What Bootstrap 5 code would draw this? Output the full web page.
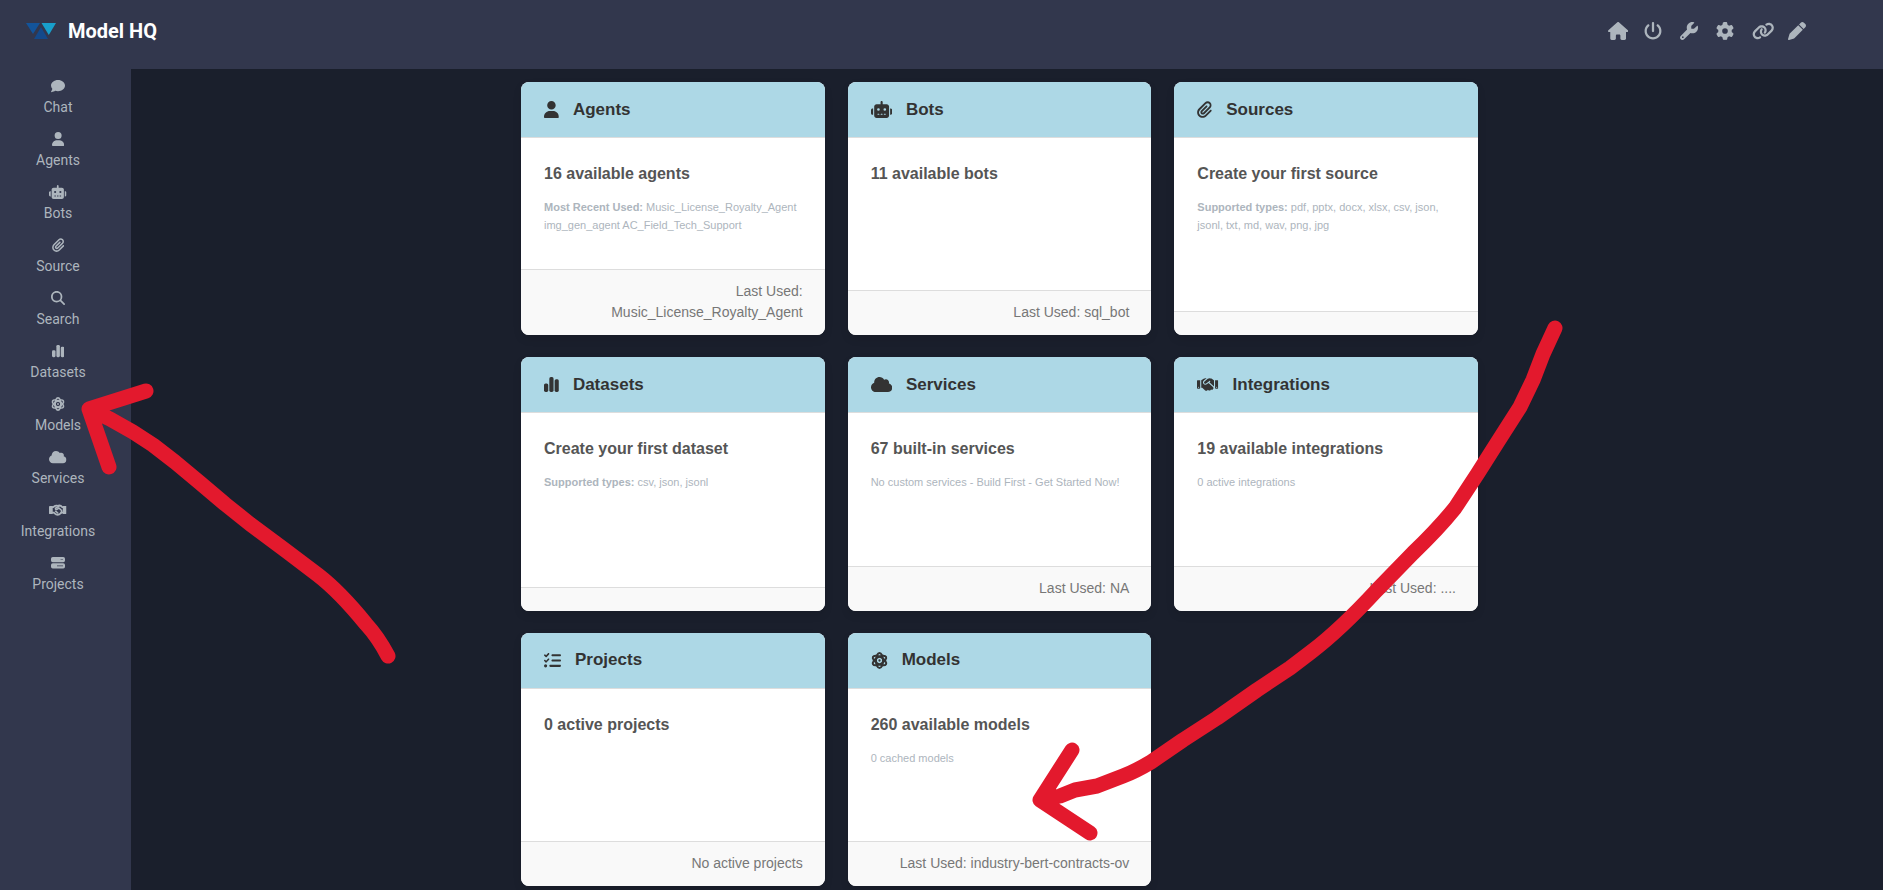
<!DOCTYPE html>
<html lang="en">
<head>
<meta charset="utf-8">
<meta name="viewport" content="width=device-width, initial-scale=1">
<title>Model HQ</title>
<link href="https://cdn.jsdelivr.net/npm/bootstrap@5.3.0/dist/css/bootstrap.min.css" rel="stylesheet">
<style>
  body { background: #1a1f2c; font-family: "Liberation Sans", Arial, sans-serif; }
  .ico { height: 1em; width: auto; fill: currentColor; display: block; flex: none; }
  .chrome { background: #32374d; color: #adb5bd; font-family: Roboto, sans-serif; }
  .topbar { height: 69px; padding: 0 59px 7px 26px; }
  .brand { font-size: 20px; font-weight: 700; color: #fff; gap: 12px; }
  .brand:hover { color: #fff; }
  .tool { width: 36px; padding: 0; border: 0; background: none; color: inherit; font-size: 18px; text-align: left; }
  .side { width: 131px; padding: 7px 15px 0 0; }
  .side-link { padding: 3px 0 12px; gap: 4px; color: inherit; font-size: 14px; line-height: 20px; }
  .side-link:hover { color: #fff; }
  .board { padding: 13px 15px 4px 0; }
  .tiles { display: grid; width: 957px; max-width: 100%; grid-template-columns: repeat(3, 1fr); grid-auto-rows: minmax(253px, 1fr); gap: 22px 23px; }
  .tile { border: 0; border-radius: 8px; overflow: hidden; box-shadow: 0 4px 8px rgba(0, 0, 0, .1); }
  .tile .card-header { background: #add8e6; border-bottom: 1px solid #ddd; color: #333; height: 56px; padding: 0 23px; gap: 14px; font-size: 17px; }
  .tile h2 { font-size: 17px; line-height: 22px; font-weight: 700; margin: 0; }
  .tile .card-body { padding: 23px; }
  .count { font-size: 16px; line-height: 26px; font-weight: 700; color: #555; margin: 0 0 11px; }
  .note { font-size: 11px; line-height: 18px; color: #adb5bd; margin: 0; }
  .tile .card-footer { background: #f9f9f9; border-top: 1px solid #ddd; color: #777; padding: 11px 22px 12px; font-size: 14px; line-height: 21px; text-align: right; }
  .marks { inset: 0; width: 100%; height: 100%; pointer-events: none; fill: none; stroke: #e3192d; stroke-width: 15; stroke-linecap: round; stroke-linejoin: round; z-index: 5; }
</style>
</head>
<body>
<svg class="d-none" aria-hidden="true">
  <symbol id="house" viewBox="0 0 576 512"><path d="M575.8 255.5c0 18-15 32.1-32 32.1h-32l.7 160.2c0 2.7-.2 5.4-.5 8.1V472c0 22.1-17.9 40-40 40H392c-22.1 0-40-17.9-40-40V384c0-17.7-14.3-32-32-32H256c-17.7 0-32 14.3-32 32v88c0 22.1-17.9 40-40 40H104c-22.1 0-40-17.9-40-40V287.600H32c-18 0-32-14-32-32.100c0-9 3-17 10-24L266.400 8c7-7 15-8 22-8s15 2 21 7L564.800 231.500c8 7 12 15 11 24z"/></symbol>
  <symbol id="power" viewBox="0 0 512 512"><path d="M288 32c0-17.700-14.300-32-32-32s-32 14.300-32 32V256c0 17.700 14.300 32 32 32s32-14.300 32-32V32zM143.500 120.600c13.600-11.300 15.400-31.500 4.100-45.100s-31.500-15.400-45.100-4.100C49.700 115.400 16 181.800 16 256c0 132.500 107.500 240 240 240s240-107.500 240-240c0-74.200-33.800-140.600-86.600-184.600c-13.600-11.300-33.800-9.400-45.100 4.100s-9.400 33.800 4.100 45.100c38.900 32.300 63.500 81 63.500 135.400c0 97.200-78.800 176-176 176s-176-78.800-176-176c0-54.400 24.700-103.100 63.500-135.400z"/></symbol>
  <symbol id="wrench" viewBox="0 0 512 512"><path d="M352 320c88.400 0 160-71.600 160-160c0-15.300-2.200-30.100-6.200-44.200c-3.100-10.800-16.400-13.200-24.300-5.300l-76.800 76.800c-3 3-7.100 4.700-11.300 4.700H336c-8.800 0-16-7.200-16-16V118.600c0-4.200 1.700-8.300 4.700-11.300l76.800-76.800c7.900-7.900 5.400-21.200-5.300-24.300C382.100 2.200 367.300 0 352 0C263.600 0 192 71.600 192 160c0 19.100 3.400 37.500 9.500 54.500L19.900 396.100C7.200 408.800 0 426.100 0 444.100C0 481.600 30.400 512 67.900 512c18 0 35.300-7.200 48-19.900L297.500 310.500c17 6.200 35.400 9.500 54.500 9.500zM80 408a24 24 0 1 1 0 48 24 24 0 1 1 0-48z"/></symbol>
  <symbol id="gear" viewBox="0 0 512 512"><path d="M495.900 166.600c3.200 8.700 .5 18.400-6.400 24.600l-43.300 39.400c1.100 8.300 1.700 16.800 1.700 25.400s-.6 17.100-1.700 25.400l43.300 39.400c6.900 6.200 9.600 15.900 6.400 24.600c-4.400 11.900-9.700 23.300-15.800 34.300l-4.700 8.100c-6.600 11-14 21.400-22.100 31.200c-5.900 7.200-15.700 9.600-24.500 6.800l-55.700-17.700c-13.400 10.300-28.200 18.900-44 25.400l-12.500 57.100c-2 9.100-9 16.300-18.200 17.800c-13.800 2.300-28 3.500-42.500 3.500s-28.700-1.200-42.500-3.500c-9.200-1.500-16.200-8.700-18.200-17.800l-12.500-57.100c-15.800-6.500-30.600-15.100-44-25.400L83.100 425.900c-8.800 2.800-18.600 .3-24.500-6.800c-8.100-9.800-15.500-20.200-22.100-31.200l-4.700-8.100c-6.100-11-11.400-22.400-15.800-34.300c-3.200-8.700-.5-18.400 6.400-24.600l43.300-39.400C64.600 273.100 64 264.600 64 256s.6-17.100 1.700-25.400L22.400 191.200c-6.900-6.200-9.600-15.900-6.400-24.600c4.400-11.900 9.700-23.300 15.800-34.300l4.700-8.100c6.600-11 14-21.400 22.100-31.200c5.900-7.200 15.700-9.600 24.500-6.800l55.700 17.700c13.400-10.300 28.200-18.900 44-25.400l12.500-57.100c2-9.100 9-16.300 18.200-17.800C227.300 1.200 241.500 0 256 0s28.700 1.200 42.500 3.500c9.200 1.500 16.200 8.700 18.200 17.800l12.500 57.100c15.800 6.500 30.600 15.100 44 25.400l55.700-17.700c8.800-2.800 18.600-.3 24.500 6.800c8.100 9.800 15.500 20.200 22.100 31.200l4.700 8.100c6.100 11 11.400 22.400 15.800 34.300zM256 336a80 80 0 1 0 0-160 80 80 0 1 0 0 160z"/></symbol>
  <symbol id="link" viewBox="0 0 640 512"><path d="M579.800 267.700c56.500-56.500 56.500-148 0-204.500c-50-50-128.800-56.500-186.300-15.400l-1.600 1.100c-14.400 10.300-17.700 30.300-7.400 44.600s30.300 17.700 44.600 7.400l1.600-1.100c32.100-22.900 76-19.300 103.800 8.600c31.500 31.500 31.500 82.500 0 114L422.300 334.800c-31.500 31.500-82.500 31.500-114 0c-27.900-27.900-31.500-71.800-8.600-103.800l1.100-1.600c10.300-14.400 6.900-34.400-7.400-44.600s-34.400-6.900-44.600 7.400l-1.100 1.600C206.500 251.200 213 330 263 380c56.500 56.500 148 56.500 204.500 0L579.800 267.700zM60.200 244.300c-56.500 56.500-56.500 148 0 204.500c50 50 128.800 56.500 186.300 15.400l1.600-1.100c14.400-10.300 17.700-30.300 7.400-44.600s-30.300-17.700-44.600-7.400l-1.600 1.100c-32.100 22.900-76 19.300-103.800-8.600C74 372 74 321 105.500 289.500L217.700 177.200c31.500-31.500 82.500-31.500 114 0c27.900 27.900 31.500 71.800 8.600 103.900l-1.100 1.600c-10.300 14.400-6.900 34.400 7.400 44.600s34.400 6.900 44.600-7.400l1.100-1.600C433.500 260.800 427 182 377 132c-56.500-56.500-148-56.500-204.500 0L60.200 244.300z"/></symbol>
  <symbol id="pen" viewBox="0 0 512 512"><path d="M362.700 19.300L314.300 67.700 444.300 197.700l48.400-48.400c25-25 25-65.500 0-90.500L453.300 19.300c-25-25-65.500-25-90.500 0zm-71 71L58.600 323.500c-10.400 10.400-18 23.300-22.200 37.400L1 481.200C-1.500 489.700 .8 498.800 7 505s15.300 8.500 23.700 6.100l120.300-35.400c14.100-4.200 27-11.800 37.400-22.200L421.700 220.300 291.700 90.300z"/></symbol>
  <symbol id="chat" viewBox="0 0 512 512"><path d="M512 240c0 114.900-114.600 208-256 208c-37.100 0-72.300-6.400-104.100-17.900c-11.900 8.700-31.300 20.600-54.300 30.600C73.600 471.100 44.700 480 16 480c-6.500 0-12.300-3.900-14.800-9.900c-2.500-6-1.100-12.800 3.400-17.400c1-1 3-3.300 6.500-7.400c4.100-5 9.600-12.400 15.200-21.600c10-16.600 19.500-38.400 21.400-62.900C17.700 326.800 0 285.100 0 240C0 125.100 114.600 32 256 32s256 93.100 256 208z"/></symbol>
  <symbol id="user" viewBox="0 0 448 512"><path d="M224 256A128 128 0 1 0 224 0a128 128 0 1 0 0 256zm-45.700 48C79.800 304 0 383.800 0 482.300C0 498.700 13.300 512 29.700 512H418.300c16.400 0 29.700-13.300 29.700-29.700C448 383.800 368.200 304 269.700 304H178.300z"/></symbol>
  <symbol id="robot" viewBox="0 0 640 512"><path d="M320 0c17.700 0 32 14.300 32 32V96H472c39.800 0 72 32.200 72 72V440c0 39.800-32.200 72-72 72H168c-39.800 0-72-32.200-72-72V168c0-39.800 32.200-72 72-72H288V32c0-17.700 14.300-32 32-32zM208 384c-8.800 0-16 7.200-16 16s7.200 16 16 16h32c8.800 0 16-7.200 16-16s-7.200-16-16-16H208zm96 0c-8.800 0-16 7.200-16 16s7.200 16 16 16h32c8.800 0 16-7.200 16-16s-7.200-16-16-16H304zm96 0c-8.800 0-16 7.200-16 16s7.200 16 16 16h32c8.800 0 16-7.200 16-16s-7.200-16-16-16H400zM264 256a40 40 0 1 0 -80 0 40 40 0 1 0 80 0zm152 40a40 40 0 1 0 0-80 40 40 0 1 0 0 80zM48 224H64V416H48c-26.500 0-48-21.500-48-48V272c0-26.500 21.500-48 48-48zm544 0c26.500 0 48 21.500 48 48v96c0 26.500-21.500 48-48 48H576V224h16z"/></symbol>
  <symbol id="clip" viewBox="0 0 448 512"><path d="M364.200 83.800c-24.400-24.400-64-24.400-88.400 0l-184 184c-42.100 42.100-42.100 110.300 0 152.400s110.300 42.100 152.400 0l152-152c10.900-10.900 28.700-10.900 39.600 0s10.900 28.700 0 39.600l-152 152c-64 64-167.600 64-231.600 0s-64-167.600 0-231.600l184-184c46.300-46.300 121.300-46.300 167.600 0s46.300 121.300 0 167.600l-176 176c-28.600 28.600-75 28.600-103.600 0s-28.600-75 0-103.600l144-144c10.900-10.900 28.700-10.900 39.600 0s10.900 28.700 0 39.600l-144 144c-6.700 6.700-6.700 17.700 0 24.400s17.700 6.700 24.400 0l176-176c24.400-24.400 24.400-64 0-88.400z"/></symbol>
  <symbol id="search" viewBox="0 0 512 512"><path d="M416 208c0 45.900-14.900 88.300-40 122.700L502.600 457.400c12.500 12.500 12.500 32.800 0 45.300s-32.800 12.500-45.300 0L330.700 376c-34.400 25.200-76.800 40-122.700 40C93.100 416 0 322.900 0 208S93.100 0 208 0S416 93.100 416 208zM208 352a144 144 0 1 0 0-288 144 144 0 1 0 0 288z"/></symbol>
  <symbol id="bars" viewBox="0 0 448 512"><rect y="224" width="128" height="256" rx="48"/><rect x="160" y="32" width="128" height="448" rx="48"/><rect x="320" y="96" width="128" height="384" rx="48"/></symbol>
  <symbol id="atom" viewBox="0 0 512 512"><g fill="none" stroke="currentColor" stroke-width="60"><ellipse cx="256" cy="256" rx="105" ry="226"/><ellipse cx="256" cy="256" rx="105" ry="226" transform="rotate(60 256 256)"/><ellipse cx="256" cy="256" rx="105" ry="226" transform="rotate(120 256 256)"/></g><circle cx="256" cy="256" r="34"/></symbol>
  <symbol id="cloud" viewBox="0 0 640 512"><path d="M0 336c0 79.500 64.500 144 144 144H512c70.700 0 128-57.300 128-128c0-61.900-44-113.600-102.400-125.400c4.100-10.700 6.400-22.400 6.400-34.600c0-53-43-96-96-96c-19.700 0-38.100 6-53.300 16.200C367 64.200 315.300 32 256 32C167.600 32 96 103.600 96 192c0 2.700 .1 5.400 .2 8.100C40.200 219.800 0 273.200 0 336z"/></symbol>
  <symbol id="shake" viewBox="0 0 640 512"><path d="M323.400 85.200l-96.800 78.400c-16.100 13-19.200 36.400-7 53.100c12.900 17.800 38 21.300 55.300 7.800l99.300-77.200c7-5.400 17-4.200 22.500 2.800s4.200 17-2.800 22.500l-20.900 16.200L512 316.800V128h-.7l-3.900-2.500L434.800 79c-15.300-9.800-33.200-15-51.400-15c-21.800 0-43 7.500-60 21.200zm22.800 124.400l-51.700 40.200C263 274.300 217.300 268 193.700 235.600c-22.200-30.500-16.600-73.100 12.700-96.800l83.200-67.300c-11.600-4.900-24.100-7.400-36.800-7.400C234 64 215.700 69.600 200 80l-72 48V352h28.200l91.400 83.400c19.600 17.900 49.900 16.500 67.800-3.100c5.500-6.100 9.200-13.200 11.100-20.600l17 15.600c19.500 17.900 49.900 16.600 67.800-2.900c4.500-4.900 7.800-10.600 9.900-16.500c19.400 13 45.800 10.300 62.100-7.500c17.900-19.500 16.600-49.900-2.900-67.800l-134.200-123zM16 128c-8.800 0-16 7.200-16 16V352c0 17.700 14.300 32 32 32H64c17.700 0 32-14.300 32-32V128H16zM48 320a16 16 0 1 1 0 32 16 16 0 1 1 0-32zM544 128V352c0 17.700 14.300 32 32 32h32c17.700 0 32-14.300 32-32V144c0-8.800-7.200-16-16-16H544zm32 208a16 16 0 1 1 32 0 16 16 0 1 1 -32 0z"/></symbol>
  <symbol id="shake-flat" viewBox="0 0 640 512"><rect y="112" width="136" height="288" rx="16"/><rect x="504" y="112" width="136" height="288" rx="16"/><g fill="none" stroke="currentColor" stroke-linecap="round" stroke-linejoin="round"><path stroke-width="68" d="M96 150h64l70-48q30-14 60-4M350 98q40-16 76 2l60 50h60M96 350h70l90 66q60 26 120 0l90-66h80"/><path stroke-width="56" d="M360 118L240 190q-16 44 34 50l90-56 96 90q18 40-20 66M240 300l80 66"/></g></symbol>
  <symbol id="server" viewBox="0 0 512 512"><path fill-rule="evenodd" d="M64 32H448a64 64 0 0 1 64 64v64a64 64 0 0 1-64 64H64a64 64 0 0 1-64-64V96a64 64 0 0 1 64-64zM350 116v24h90v-24zM64 264H448a64 64 0 0 1 64 64v64a64 64 0 0 1-64 64H64a64 64 0 0 1-64-64v-64a64 64 0 0 1 64-64zM220 348v24h220v-24z"/></symbol>
  <symbol id="tasks" viewBox="0 0 512 512"><path d="M152.100 38.200c9.900 8.900 10.700 24 1.800 33.900l-72 80c-4.400 4.900-10.600 7.800-17.200 7.900s-12.900-2.400-17.600-7L7 113C-2.300 103.600-2.300 88.400 7 79s24.600-9.400 33.900 0l22.100 22.100 55.100-61.200c8.900-9.900 24-10.700 33.900-1.800zm0 160c9.900 8.900 10.700 24 1.800 33.900l-72 80c-4.400 4.900-10.600 7.800-17.200 7.900s-12.900-2.400-17.600-7L7 273c-9.400-9.400-9.400-24.600 0-33.900s24.600-9.400 33.900 0l22.100 22.100 55.100-61.200c8.900-9.900 24-10.700 33.900-1.800zM224 96c0-17.700 14.300-32 32-32H480c17.700 0 32 14.300 32 32s-14.300 32-32 32H256c-17.700 0-32-14.300-32-32zm0 160c0-17.700 14.300-32 32-32H480c17.700 0 32 14.300 32 32s-14.300 32-32 32H256c-17.700 0-32-14.300-32-32zM160 416c0-17.700 14.300-32 32-32H480c17.700 0 32 14.300 32 32s-14.300 32-32 32H192c-17.700 0-32-14.300-32-32zM48 368a48 48 0 1 1 0 96 48 48 0 1 1 0-96z"/></symbol>
</svg>

<div class="position-relative d-flex flex-column min-vh-100">
  <header class="chrome topbar d-flex align-items-center justify-content-between">
    <a class="brand d-flex align-items-center text-decoration-none" href="#">
      <svg width="30" height="16" viewBox="0 0 30 16" aria-hidden="true"><path fill="#13549a" d="M0 0h14L7 11z"/><path fill="#14498a" d="M15 4l7 12H8z"/><path fill="#189fcb" d="M15.500 0H30l-7.200 12z"/></svg>
      <span>Model HQ</span>
    </a>
    <div class="d-flex">
      <button class="tool" type="button" aria-label="Home"><svg class="ico" viewBox="0 0 576 512"><use href="#house"/></svg></button>
      <button class="tool" type="button" aria-label="Power"><svg class="ico" viewBox="0 0 512 512"><use href="#power"/></svg></button>
      <button class="tool" type="button" aria-label="Tools"><svg class="ico" viewBox="0 0 512 512"><use href="#wrench"/></svg></button>
      <button class="tool" type="button" aria-label="Settings"><svg class="ico" viewBox="0 0 512 512"><use href="#gear"/></svg></button>
      <button class="tool" type="button" aria-label="Links"><svg class="ico" viewBox="0 0 640 512"><use href="#link"/></svg></button>
      <button class="tool" type="button" aria-label="Edit"><svg class="ico" viewBox="0 0 512 512"><use href="#pen"/></svg></button>
    </div>
  </header>

  <div class="d-flex flex-grow-1">
    <nav class="chrome side d-flex flex-column flex-shrink-0" aria-label="Main">
      <a class="side-link d-flex flex-column align-items-center text-decoration-none" href="#"><svg class="ico" viewBox="0 0 512 512"><use href="#chat"/></svg>Chat</a>
      <a class="side-link d-flex flex-column align-items-center text-decoration-none" href="#"><svg class="ico" viewBox="0 0 448 512"><use href="#user"/></svg>Agents</a>
      <a class="side-link d-flex flex-column align-items-center text-decoration-none" href="#"><svg class="ico" viewBox="0 0 640 512"><use href="#robot"/></svg>Bots</a>
      <a class="side-link d-flex flex-column align-items-center text-decoration-none" href="#"><svg class="ico" viewBox="0 0 448 512"><use href="#clip"/></svg>Source</a>
      <a class="side-link d-flex flex-column align-items-center text-decoration-none" href="#"><svg class="ico" viewBox="0 0 512 512"><use href="#search"/></svg>Search</a>
      <a class="side-link d-flex flex-column align-items-center text-decoration-none" href="#"><svg class="ico" viewBox="0 0 448 512"><use href="#bars"/></svg>Datasets</a>
      <a class="side-link d-flex flex-column align-items-center text-decoration-none" href="#"><svg class="ico" viewBox="0 0 512 512"><use href="#atom"/></svg>Models</a>
      <a class="side-link d-flex flex-column align-items-center text-decoration-none" href="#"><svg class="ico" viewBox="0 0 640 512"><use href="#cloud"/></svg>Services</a>
      <a class="side-link d-flex flex-column align-items-center text-decoration-none" href="#"><svg class="ico" viewBox="0 0 640 512"><use href="#shake-flat"/></svg>Integrations</a>
      <a class="side-link d-flex flex-column align-items-center text-decoration-none" href="#"><svg class="ico" viewBox="0 0 512 512"><use href="#server"/></svg>Projects</a>
    </nav>

    <main class="board flex-grow-1 d-flex justify-content-center">
      <div class="tiles">
        <section class="card tile">
          <div class="card-header d-flex align-items-center"><svg class="ico" viewBox="0 0 448 512"><use href="#user"/></svg><h2>Agents</h2></div>
          <div class="card-body"><p class="count">16 available agents</p><p class="note"><b>Most Recent Used:</b> Music_License_Royalty_Agent img_gen_agent AC_Field_Tech_Support</p></div>
          <div class="card-footer">Last Used: Music_License_Royalty_Agent</div>
        </section>
        <section class="card tile">
          <div class="card-header d-flex align-items-center"><svg class="ico" viewBox="0 0 640 512"><use href="#robot"/></svg><h2>Bots</h2></div>
          <div class="card-body"><p class="count">11 available bots</p></div>
          <div class="card-footer">Last Used: sql_bot</div>
        </section>
        <section class="card tile">
          <div class="card-header d-flex align-items-center"><svg class="ico" viewBox="0 0 448 512"><use href="#clip"/></svg><h2>Sources</h2></div>
          <div class="card-body"><p class="count">Create your first source</p><p class="note"><b>Supported types:</b> pdf, pptx, docx, xlsx, csv, json, jsonl, txt, md, wav, png, jpg</p></div>
          <div class="card-footer"></div>
        </section>
        <section class="card tile">
          <div class="card-header d-flex align-items-center"><svg class="ico" viewBox="0 0 448 512"><use href="#bars"/></svg><h2>Datasets</h2></div>
          <div class="card-body"><p class="count">Create your first dataset</p><p class="note"><b>Supported types:</b> csv, json, jsonl</p></div>
          <div class="card-footer"></div>
        </section>
        <section class="card tile">
          <div class="card-header d-flex align-items-center"><svg class="ico" viewBox="0 0 640 512"><use href="#cloud"/></svg><h2>Services</h2></div>
          <div class="card-body"><p class="count">67 built-in services</p><p class="note">No custom services - Build First - Get Started Now!</p></div>
          <div class="card-footer">Last Used: NA</div>
        </section>
        <section class="card tile">
          <div class="card-header d-flex align-items-center"><svg class="ico" viewBox="0 0 640 512"><use href="#shake"/></svg><h2>Integrations</h2></div>
          <div class="card-body"><p class="count">19 available integrations</p><p class="note">0 active integrations</p></div>
          <div class="card-footer">Last Used: ....</div>
        </section>
        <section class="card tile">
          <div class="card-header d-flex align-items-center"><svg class="ico" viewBox="0 0 512 512"><use href="#tasks"/></svg><h2>Projects</h2></div>
          <div class="card-body"><p class="count">0 active projects</p></div>
          <div class="card-footer">No active projects</div>
        </section>
        <section class="card tile">
          <div class="card-header d-flex align-items-center"><svg class="ico" viewBox="0 0 512 512"><use href="#atom"/></svg><h2>Models</h2></div>
          <div class="card-body"><p class="count">260 available models</p><p class="note">0 cached models</p></div>
          <div class="card-footer">Last Used: industry-bert-contracts-ov</div>
        </section>
      </div>
    </main>
  </div>

  <!-- Hand-drawn arrows laid over the page -->
  <svg class="marks position-absolute" viewBox="0 0 1883 890" aria-hidden="true">
    <path d="M388 656Q378 637 366 624Q340 592 318 575Q284 549 250 524L225 504L199 482L175 462L153 445L133 432L110 419L89 409M146 391L89 409L109 467"/>
    <path d="M1555 328L1543 354L1533 380L1520 407L1497 443L1478 473L1455 508Q1438 529 1413 553L1377 590Q1340 630 1311 652L1290 668L1257 690L1217 718L1183 740L1151 762Q1136 771 1123 776L1097 786L1075 790L1060 796L1040 800M1072 750L1040 800L1090 833"/>
  </svg>
</div>
<script src="https://cdn.jsdelivr.net/npm/bootstrap@5.3.0/dist/js/bootstrap.bundle.min.js"></script>
</body>
</html>
